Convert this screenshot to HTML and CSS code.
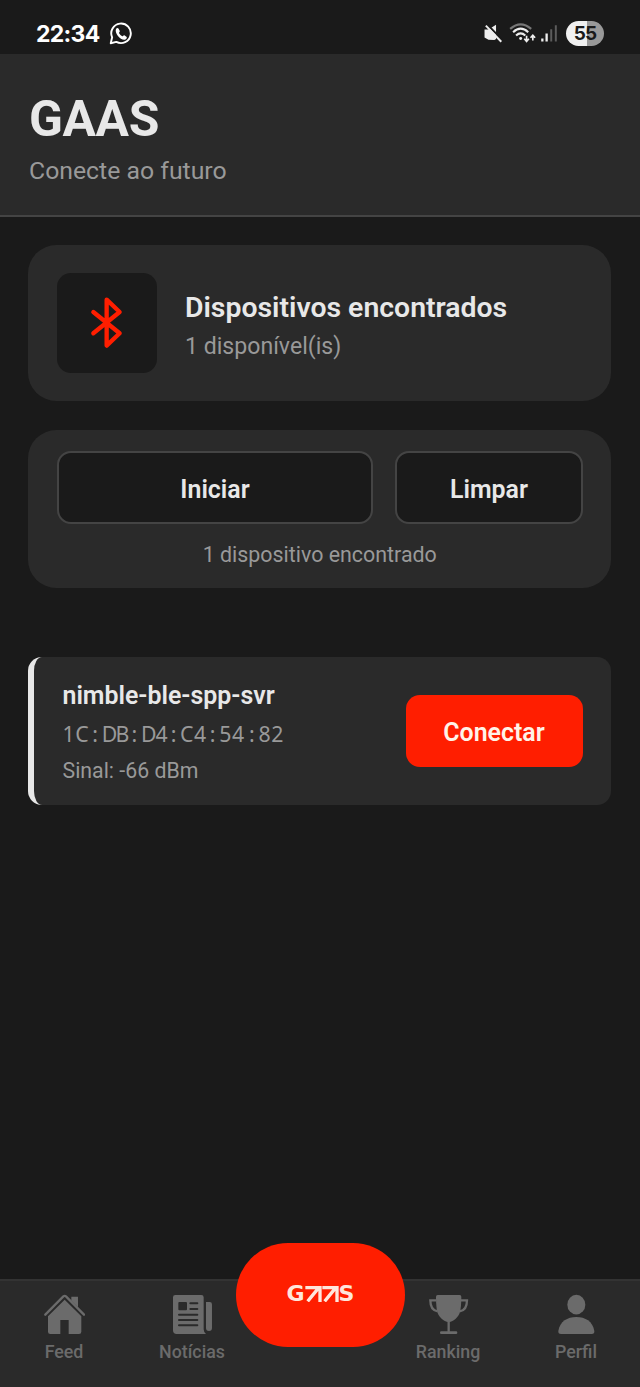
FILE: index.html
```html
<!DOCTYPE html>
<html lang="pt-BR">
<head>
<meta charset="utf-8">
<title>GAAS</title>
<link rel="stylesheet" href="styles.css">
</head>
<body>
<div class="app">
  <div class="status">
    <span class="clock">22:34</span>
    <svg class="whatsapp" viewBox="0 0 66 66"><path d="M5 61 9 44A28 28 0 1 1 21 57Z" fill="none" stroke="#fff" stroke-width="5.5" stroke-linejoin="round"/><path d="M20 20c3-4 6-4 8 0l3 6c1 2-3 4-2 6 2 4 5 7 9 9 2 0 4-4 6-3l6 4c3 2 0 6-3 8-11 5-32-16-27-30Z" fill="#fff"/></svg>
    <svg class="signals" viewBox="70 65 228 70">
      <path d="M73 88h12l23-15v44l-5 3-18-1-12-7Z" fill="#eee"/>
      <path d="M80 71l49 51" stroke="#1a1a1a" stroke-width="6"/>
      <path d="M77 76l47 49" stroke="#eee" stroke-width="6"/>
      <g fill="none" stroke-width="6.500">
        <path d="M151 86Q183 58 215 86" stroke="#777"/>
        <path d="M160 96Q183 75 206 96M169 106Q183 93 197 106" stroke="#eee"/>
      </g>
      <circle cx="183" cy="115" r="4.500" fill="#eee"/>
      <path d="M201 107v16m-7-7 7 8 7-8M220 121v-15m-7 7 7-8 7 8" fill="none" stroke="#eee" stroke-width="5"/>
      <path d="M249 115v9M262 100v24" stroke="#eee" stroke-width="7"/>
      <path d="M276 87v37M290 75v49" stroke="#5c5c5c" stroke-width="6"/>
    </svg>
    <span class="battery">55</span>
  </div>

  <header class="header">
    <h1 class="brand">GAAS</h1>
    <p class="tagline">Conecte ao futuro</p>
  </header>

  <main class="content">
    <section class="card summary">
      <div class="bt-box">
        <svg class="bt" viewBox="0 0 100 160"><path d="M10 48 89 112 50 149V11L89 48 10 112" fill="none" stroke="#ff1e00" stroke-width="13" stroke-linecap="round" stroke-linejoin="round"/></svg>
      </div>
      <div class="summary-text">
        <h2 class="summary-title">Dispositivos encontrados</h2>
        <p class="summary-sub">1 disponível(is)</p>
      </div>
    </section>

    <section class="card controls">
      <div class="buttons">
        <button class="btn">Iniciar</button>
        <button class="btn">Limpar</button>
      </div>
      <p class="count">1 dispositivo encontrado</p>
    </section>

    <section class="device">
      <div class="device-info">
        <h3 class="device-name">nimble-ble-spp-svr</h3>
        <p class="mac"><span class="pair">1C</span><span class="colon">:</span><span class="pair tight">DB</span><span class="colon">:</span><span class="pair mid">D4</span><span class="colon">:</span><span class="pair">C4</span><span class="colon">:</span><span class="pair">54</span><span class="colon">:</span><span class="pair">82</span></p>
        <p class="rssi">Sinal: -66 dBm</p>
      </div>
      <button class="connect">Conectar</button>
    </section>
  </main>

  <nav class="nav">
    <a class="tab">
      <svg class="tab-icon" viewBox="128 69 128 128"><path d="M135 134 189 79q4-3 8 0l54 55" fill="none" stroke="currentColor" stroke-width="7" stroke-linecap="round"/><path d="M213 80h20v32l-20-20Z" fill="currentColor"/><path d="M193 89 143 139v46q0 7 7 7h30v-42h25v42h31q7 0 7-7v-46Z" fill="currentColor"/></svg>
      <span>Feed</span>
    </a>
    <a class="tab">
      <svg class="tab-icon" viewBox="513 69 128 128"><path d="M526 75h78q7 0 7 7v96q0 9 7 14h-88q-11 0-11-11V82q0-7 7-7Z" fill="currentColor"/><path d="M618 96h11q7 0 7 7v71q0 9-9 9t-9-9Z" fill="currentColor"/><rect x="535" y="96" width="26" height="25" rx="3" fill="#2a2a2a"/><path d="M571 100h21M571 117h21M537 134h55M537 150h55M537 166h55" stroke="#2a2a2a" stroke-width="6" stroke-linecap="round"/></svg>
      <span>Notícias</span>
    </a>
    <a class="tab"></a>
    <a class="tab">
      <svg class="tab-icon" viewBox="80 69 128 128"><path d="M112 75h66q5 0 5 5c0 14-1 35-4 46-5 16-18 28-34 31-16-3-29-15-34-31-3-11-4-32-4-46q0-5 5-5Z" fill="currentColor"/><path d="M108 91H90c0 18 6 31 22 33M182 91h18c0 18-6 31-22 33M145 154v34" fill="none" stroke="currentColor" stroke-width="7"/><path d="M123 188h44" stroke="currentColor" stroke-width="8" stroke-linecap="round"/></svg>
      <span>Ranking</span>
    </a>
    <a class="tab">
      <svg class="tab-icon" viewBox="465 69 128 128"><ellipse cx="529" cy="104" rx="27" ry="29.500" fill="currentColor"/><path d="M483 192q-9 0-8-9c5-29 27-42 54-42s49 13 54 42q1 9-8 9Z" fill="currentColor"/></svg>
      <span>Perfil</span>
    </a>
    <div class="fab">
      <div class="logo" aria-label="GAAS">
        <span class="logo-letter">G</span>
        <svg class="logo-arrows" viewBox="0 0 102 48"><path d="M1 5H45V48M39 8 8 46M52 5H96V48M90 8 59 46" fill="none" stroke="#ffe6dc" stroke-width="10"/></svg>
        <span class="logo-letter">S</span>
      </div>
    </div>
  </nav>
</div>
</body>
</html>
```
FILE: styles.css
```css
* { box-sizing: border-box; }
body { margin: 0; background: #1a1a1a; }
h1, h2, h3, p { margin: 0; }
button { font: inherit; margin: 0; }
svg { display: block; flex: none; }

.app {
  display: flex;
  flex-direction: column;
  width: 640px;
  height: 1387px;
  overflow: hidden;
  background: #1a1a1a;
  color: #e8e8e8;
  font-family: Roboto, sans-serif;
}

.status {
  display: flex;
  align-items: center;
  height: 54px;
  padding: 13px 36px 0 36px;
}
.clock {
  width: 64px;
  margin-right: 9px;
  color: #fff;
  font: 700 23px/40px Inter, sans-serif;
  letter-spacing: -0.700px;
  white-space: nowrap;
}
.whatsapp { width: 23px; height: 23px; }
.signals { width: 76px; height: 23px; margin-left: auto; }
.battery {
  width: 38px;
  height: 25px;
  margin-left: 7px;
  border-radius: 13px;
  background: linear-gradient(90deg, #f0f0f0 55%, #999 55%);
  color: #1a1a1a;
  font: 700 19px/26px Inter, sans-serif;
  letter-spacing: -0.800px;
  text-align: center;
}

.header {
  height: 163px;
  padding: 36px 29px 0;
  border-bottom: 2px solid #444;
  background: #2a2a2a;
}
.brand { font-size: 49.800px; line-height: 58px; font-weight: 700; letter-spacing: -0.400px; }
.tagline { margin-top: 8px; color: #999; font-size: 24.800px; line-height: 29px; }

.content { flex: 1; padding: 28px 29px 0 28px; }
.card { border-radius: 28.500px; background: #2a2a2a; }

.summary {
  display: flex;
  align-items: center;
  gap: 28.500px;
  height: 156px;
  padding: 0 28.500px;
}
.bt-box {
  display: grid;
  place-items: center;
  width: 100px;
  height: 100px;
  border-radius: 14px;
  background: #1a1a1a;
}
.bt { width: 33.300px; height: 53.300px; }
.summary-text { padding-top: 5px; }
.summary-title { font-size: 28.400px; line-height: 34px; font-weight: 600; }
.summary-sub { margin-top: 8px; color: #999; font-size: 23.100px; line-height: 28px; }

.controls { height: 158px; margin-top: 29px; padding: 21px 28.500px 0 29px; }
.buttons { display: grid; grid-template-columns: 316px 188px; gap: 22px; }
.btn {
  height: 73px;
  padding: 3px 0 0;
  border: 2px solid #444;
  border-radius: 14px;
  background: #1a1a1a;
  color: #e8e8e8;
  font-size: 24.900px;
  font-weight: 600;
}
.count {
  margin-top: 18px;
  color: #999;
  font-size: 21.400px;
  line-height: 26px;
  text-align: center;
}

.device {
  display: flex;
  align-items: center;
  justify-content: space-between;
  height: 148px;
  margin-top: 68.500px;
  padding: 0 28.500px;
  border-left: 6px solid #e8e8e8;
  border-radius: 14px;
  background: #2a2a2a;
}
.device-info { display: flex; flex-direction: column; gap: 8px; padding-top: 4px; }
.device-name { font-size: 24.900px; line-height: 30px; font-weight: 600; }
.mac {
  display: flex;
  color: #999;
  font: 21.300px/29px "Noto Sans", sans-serif;
  white-space: nowrap;
}
.pair { width: 26.100px; letter-spacing: 0.600px; }
.pair.tight { letter-spacing: -1.700px; }
.pair.mid { letter-spacing: -0.800px; }
.colon { width: 13.100px; text-align: center; }
.rssi { color: #999; font-size: 21.300px; line-height: 29px; }
.connect {
  width: 177px;
  height: 72px;
  padding: 3px 0 0;
  border: 0;
  border-radius: 14px;
  background: #ff1e00;
  color: #fff3e8;
  font-size: 24.900px;
  font-weight: 600;
}

.nav {
  position: relative;
  display: grid;
  grid-template-columns: repeat(5, 1fr);
  height: 108px;
  border-top: 2px solid #333;
  background: #2a2a2a;
}
.tab {
  display: flex;
  flex-direction: column;
  align-items: center;
  padding-top: 12px;
  color: #6b6b6b;
  font-size: 17.800px;
  line-height: 22px;
  font-weight: 500;
}
.tab-icon { width: 42.670px; height: 42.670px; margin-bottom: 5.500px; }
/* Centre button floats above the tab bar */
.fab {
  position: absolute;
  left: 236px;
  top: -38px;
  display: grid;
  place-items: center;
  width: 169px;
  height: 103.500px;
  border-radius: 52px;
  background: #ff1e00;
}
.logo { display: flex; align-items: center; height: 18px; margin-top: -2px; }
.logo-letter {
  color: #ffe6dc;
  font: 700 22px/18px "DejaVu Sans", sans-serif;
  text-align: center;
}
.logo-arrows { width: 34px; height: 16px; }
```
